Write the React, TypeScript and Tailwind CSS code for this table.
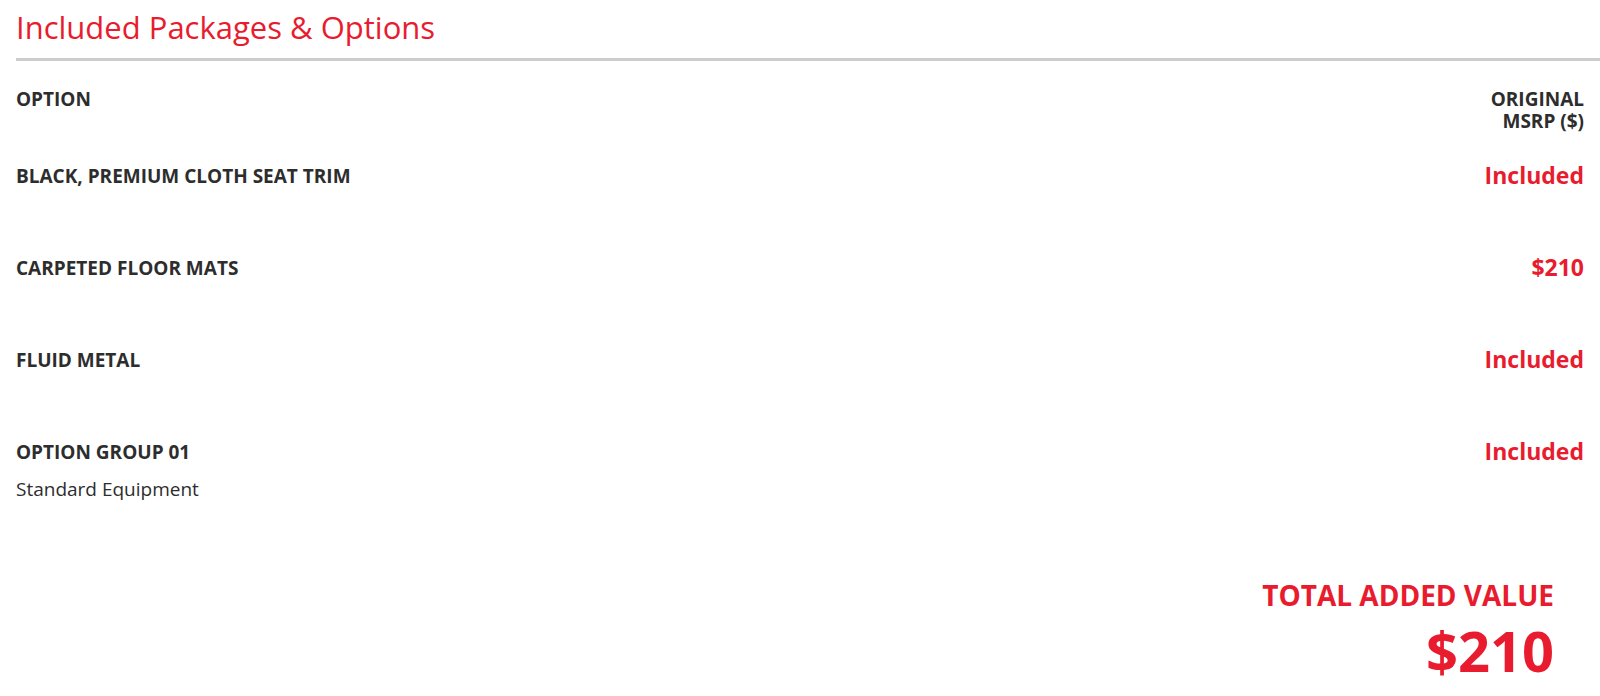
const rows = [
  { name: 'BLACK, PREMIUM CLOTH SEAT TRIM', price: 'Included' },
  { name: 'CARPETED FLOOR MATS', price: '$210' },
  { name: 'FLUID METAL', price: 'Included' },
  { name: 'OPTION GROUP 01', price: 'Included', note: 'Standard Equipment' },
]

export default function App() {
  return (
    <div className="min-h-[696px] bg-white pl-4 text-[#2d2d2d]" style={{ fontFamily: '"Open Sans", "Liberation Sans", sans-serif' }}>
      <h2 className="pt-[9px] pb-[13px] text-[31px] leading-[36px] text-[#e81c2e]">Included Packages &amp; Options</h2>
      <div className="h-[3px] bg-[#cccccc]" />
      <div className="pr-4">
        <div className="flex items-start justify-between pt-[27px] text-[19px] font-bold leading-[22px]">
          <div>OPTION</div>
          <div className="text-right">
            ORIGINAL
            <br />
            MSRP ($)
          </div>
        </div>
        {rows.map((r) => (
          <div key={r.name} className="flex h-[92px] items-start justify-between pt-[34px]">
            <div>
              <div className="text-[19px] font-bold leading-[21px]">{r.name}</div>
              {r.note && <div className="mt-[16px] text-[19px] leading-[21px]">{r.note}</div>}
            </div>
            <div className="text-[23px] font-bold leading-[18px] text-[#e81c2e]">{r.price}</div>
          </div>
        ))}
        <div className="flex flex-col items-end pr-[30px] pt-[79px] font-bold text-[#e81c2e]">
          <div className="text-[28px] leading-[32px]">TOTAL ADDED VALUE</div>
          <div className="mt-[9px] text-[56px] leading-[60px]">$210</div>
        </div>
      </div>
    </div>
  )
}
